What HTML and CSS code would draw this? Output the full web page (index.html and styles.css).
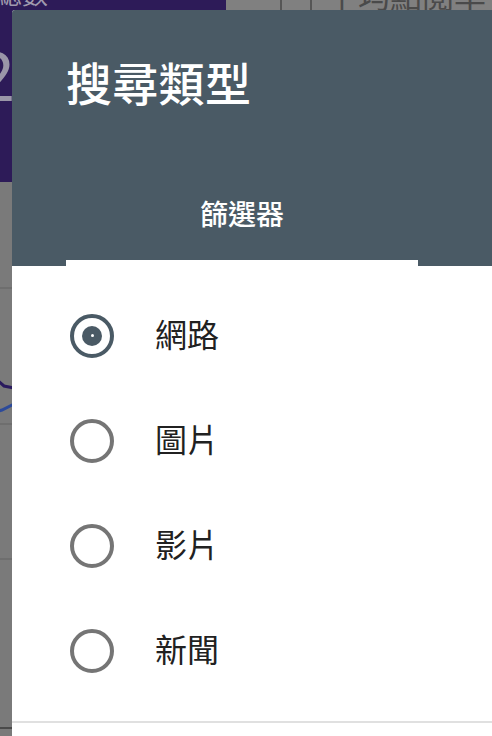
FILE: index.html
```html
<!DOCTYPE html>
<html lang="zh-Hant">
<head>
<meta charset="utf-8">
<title>搜尋類型</title>
<link rel="stylesheet" href="styles.css">
</head>
<body>
<div class="backdrop">
  <div class="bg-top">
    <div class="bg-summary">
      <div class="bg-label">總數</div>
      <div class="bg-number">2</div>
    </div>
    <div class="bg-stats">
      <div class="bg-cell"></div>
      <div class="bg-cell"></div>
      <div class="bg-cell bg-cell-wide"><span class="bg-stat-label">平均點閱率</span></div>
    </div>
  </div>
  <div class="bg-body">
    <div class="bg-rule bg-rule-1"></div>
    <svg class="bg-chart" width="40" height="60" viewBox="0 0 40 60">
      <polyline points="-10,0 4,12 14,14" fill="none" stroke="#2a1a5e" stroke-width="3"/>
      <polyline points="-10,40 2,36 14,30" fill="none" stroke="#2c4a9a" stroke-width="3"/>
    </svg>
    <div class="bg-rule bg-rule-2"></div>
    <div class="bg-rule bg-rule-3"></div>
    <div class="bg-rule bg-rule-dark"></div>
  </div>
</div>

<div class="dialog">
  <header class="dialog-header">
    <h1 class="dialog-title">搜尋類型</h1>
    <nav class="tabs">
      <div class="tab tab-active">篩選器</div>
    </nav>
  </header>
  <div class="dialog-content">
    <ul class="options">
      <li class="option">
        <span class="radio radio-checked"><span class="radio-dot"></span></span>
        <span class="option-label">網路</span>
      </li>
      <li class="option">
        <span class="radio"></span>
        <span class="option-label">圖片</span>
      </li>
      <li class="option">
        <span class="radio"></span>
        <span class="option-label">影片</span>
      </li>
      <li class="option">
        <span class="radio"></span>
        <span class="option-label">新聞</span>
      </li>
    </ul>
    <div class="divider"></div>
  </div>
</div>
</body>
</html>
```

FILE: styles.css
```css
* { box-sizing: border-box; }

html, body {
  margin: 0;
  padding: 0;
  width: 492px;
  height: 736px;
  overflow: hidden;
  font-family: "Noto Sans CJK TC", "Noto Sans", sans-serif;
}

body { position: relative; background: #7a7a7a; }

/* background page (dimmed) */
.backdrop {
  position: absolute;
  inset: 0;
  display: flex;
  flex-direction: column;
}

.bg-top {
  display: flex;
  height: 182px;
}

.bg-summary {
  width: 226px;
  background: #2d1b58;
  position: relative;
  overflow: hidden;
}

.bg-label {
  position: absolute;
  left: -4px;
  top: -20px;
  font-size: 26px;
  line-height: 1;
  color: #a09aae;
}

.bg-number {
  position: absolute;
  left: -24px;
  top: 44px;
  font-size: 68px;
  line-height: 1;
  font-family: "Roboto", sans-serif;
  color: #9a96a8;
}

.bg-stats {
  flex: 1;
  display: flex;
  background: #808080;
}

.bg-cell {
  width: 30px;
  border-right: 2px solid #555;
}

.bg-cell:first-child { width: 56px; }

.bg-cell-wide {
  flex: 1;
  border-right: none;
  position: relative;
  overflow: hidden;
}

.bg-stat-label {
  position: absolute;
  left: 14px;
  top: -22px;
  font-size: 32px;
  line-height: 1;
  color: #4a4a4a;
  white-space: nowrap;
}

.bg-body {
  flex: 1;
  position: relative;
  background: #7a7a7a;
}

.bg-rule {
  position: absolute;
  left: 0;
  width: 60px;
  height: 2px;
  background: #6e6e6e;
}

.bg-rule-1 { top: 105px; }
.bg-rule-2 { top: 241px; }
.bg-rule-3 { top: 376px; }
.bg-rule-dark { top: 545px; background: #4a4a4a; }

.bg-chart {
  position: absolute;
  left: 0;
  top: 192px;
}

/* dialog */
.dialog {
  position: absolute;
  left: 12px;
  top: 10px;
  width: 500px;
  height: 760px;
  background: #ffffff;
  border-top-left-radius: 3px;
  overflow: hidden;
  display: flex;
  flex-direction: column;
}

.dialog-header {
  background: #4a5a65;
  height: 256px;
  display: flex;
  flex-direction: column;
}

.dialog-title {
  margin: 0;
  padding: 40px 0 0 54px;
  height: 172px;
  font-size: 46px;
  font-weight: 500;
  line-height: 62px;
  color: #ffffff;
  letter-spacing: 0.3px;
}

.tabs {
  flex: 1;
  display: flex;
  padding-left: 54px;
}

.tab {
  width: 352px;
  display: flex;
  align-items: flex-start;
  justify-content: center;
  font-size: 28px;
  font-weight: 500;
  line-height: 40px;
  padding-top: 11px;
  color: #ffffff;
}

.tab-active { border-bottom: 6px solid #ffffff; }

.dialog-content {
  flex: 1;
  display: flex;
  flex-direction: column;
}

.options {
  list-style: none;
  margin: 0;
  padding: 17px 0 0 0;
}

.option {
  height: 105px;
  display: flex;
  align-items: center;
  padding-left: 58px;
}

.radio {
  width: 44px;
  height: 44px;
  border-radius: 50%;
  border: 4px solid #757575;
  display: flex;
  align-items: center;
  justify-content: center;
  flex-shrink: 0;
}

.radio-checked { border-color: #4a5a65; }

.radio-dot {
  width: 20px;
  height: 20px;
  border-radius: 50%;
  background: #4a5a65;
  display: flex;
  align-items: center;
  justify-content: center;
}

.radio-dot::after {
  content: "";
  width: 3px;
  height: 3px;
  border-radius: 50%;
  background: #ffffff;
}

.option-label {
  margin-left: 41px;
  font-size: 32px;
  line-height: 44px;
  padding-bottom: 6px;
  color: #212121;
}

.divider {
  margin-top: 18px;
  height: 2px;
  background: #e0e0e0;
}
```
